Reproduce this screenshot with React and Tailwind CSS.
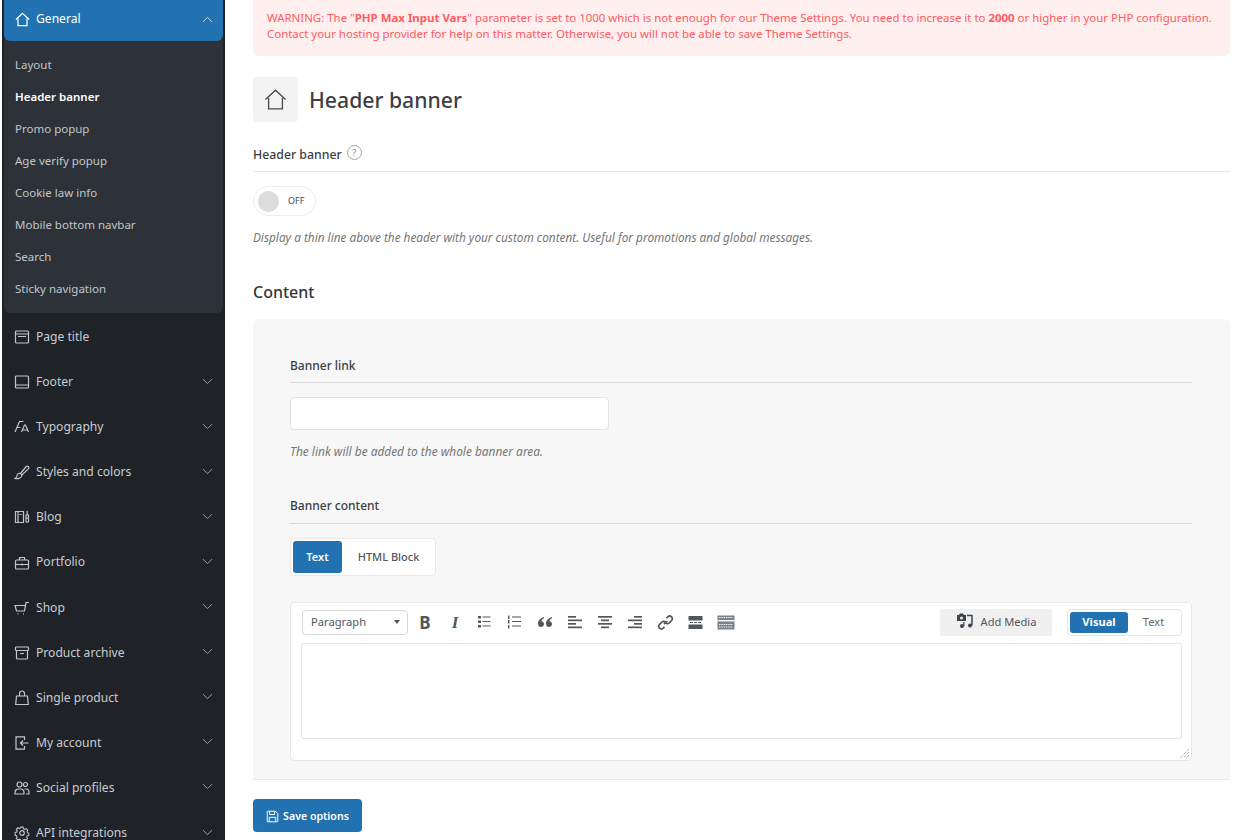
import { ChevronDown, ChevronUp } from 'lucide-react'

const Svg = ({ size = 16, sw = 1.2, className = '', children }) => (
  <svg width={size} height={size} viewBox="0 0 16 16" fill="none" stroke="currentColor" strokeWidth={sw} className={className}>
    {children}
  </svg>
)

const HomeIcon = ({ size = 16, sw = 1.2 }) => (
  <Svg size={size} sw={sw}>
    <path d="M1 8 8 1.5 15 8" />
    <path d="M3.2 7v7.5h9.6V7" />
  </Svg>
)

const icons = {
  page: <Svg><rect x="1.5" y="2" width="13" height="12" rx="1" /><path d="M1.5 5h13M4 7.5h8" /></Svg>,
  footer: <Svg><path d="M2.5 2h11a1 1 0 0 1 1 1v10a1 1 0 0 1-1 1h-11a1 1 0 0 1-1-1V3a1 1 0 0 1 1-1zM1.5 11h13" /></Svg>,
  type: <Svg><path d="M1 13 5.500 2.500H9.500M3 8.500h3.500M7.500 13l3-7h1l3 7M8.500 11h5" /></Svg>,
  brush: <Svg><path d="M6.500 9.500 12.200 2.500a1.600 1.600 0 0 1 2.300 2.200L8 11z" /><path d="M6.500 9.500C4.500 9 3.300 10 3 11.500c-.2 1.300-.8 2.500-2 3 2.500.5 6.500.3 7-3.500" /></Svg>,
  blog: <Svg><path d="M1.500 2.500h8v11h-8zM4 2.500v11M5.500 5.500h2M12 6h2.500v6a1.200 1.200 0 0 1-2.500 0zM13.200 2v4M12 9h2.500" /></Svg>,
  case: <Svg><rect x="1.500" y="5" width="13" height="9" rx="1" /><path d="M5.500 5V2.500h5V5M1.500 9.500h13M8 8.500v2" /></Svg>,
  cart: <Svg><path d="M1 5.500h10.500L10.500 11h-8zM11 8l1-5.500h3" /><path d="M3.500 14h.8M9 14h.8" strokeWidth="1.600" /></Svg>,
  archive: <Svg><rect x="1.500" y="2" width="13" height="3.500" rx=".8" /><path d="M2.500 5.500V13a1 1 0 0 0 1 1h9a1 1 0 0 0 1-1V5.500M6 8.500h4" /></Svg>,
  bag: <Svg><path d="M2.500 6h11l.8 8.500H1.700zM5.500 6V3.500a2.500 2.500 0 0 1 5 0V6" /></Svg>,
  login: <Svg><path d="M10.500 5V1.800h-8.500v12.400h8.500V11" /><path d="M14.500 8H6.500M9 5.500 6.500 8 9 10.500" /></Svg>,
  users: <Svg><circle cx="5.500" cy="4.500" r="2.500" /><circle cx="11.500" cy="4.500" r="2" /><path d="M1 14v-1.500A3.500 3.500 0 0 1 4.500 9h2A3.500 3.500 0 0 1 10 12.500V14zM10.500 9h1.500a3 3 0 0 1 3 3v2h-3" /></Svg>,
  gear: <Svg><circle cx="8" cy="8" r="2.300" /><path d="m6.800 1.500h2.400l.4 1.800 1.500.7 1.600-.9 1.700 1.700-.9 1.600.6 1.500 1.400.4v2.400l-1.700.5-.6 1.500.9 1.500-1.700 1.700-1.600-.9-1.500.6-.4 1.400H6.800l-.5-1.700-1.400-.5-1.600.9-1.700-1.700.9-1.600-.6-1.400-1.500-.5V7.400l1.700-.5.5-1.500-.9-1.500 1.700-1.700 1.600.9 1.400-.7z" transform="translate(.8 .8) scale(.9)" /></Svg>,
}

const subItems = ['Layout', 'Header banner', 'Promo popup', 'Age verify popup', 'Cookie law info', 'Mobile bottom navbar', 'Search', 'Sticky navigation']

const navItems = [
  { label: 'Page title', icon: 'page', noArrow: true },
  { label: 'Footer', icon: 'footer' },
  { label: 'Typography', icon: 'type' },
  { label: 'Styles and colors', icon: 'brush' },
  { label: 'Blog', icon: 'blog' },
  { label: 'Portfolio', icon: 'case' },
  { label: 'Shop', icon: 'cart' },
  { label: 'Product archive', icon: 'archive' },
  { label: 'Single product', icon: 'bag' },
  { label: 'My account', icon: 'login' },
  { label: 'Social profiles', icon: 'users' },
  { label: 'API integrations', icon: 'gear' },
]

function Sidebar() {
  return (
    <aside className="w-[223px] ml-[2px] shrink-0 bg-[#1f2328] h-[840px] overflow-hidden px-[2px]">
      <div className="bg-[#2c3238] rounded-b-md h-[313px]">
        <div className="h-[41px] bg-[#2271b1] rounded-b-md flex items-center pl-[11px] pr-[7px] pb-[3px] text-white">
          <HomeIcon size={15} sw={1.3} />
          <span className="ml-[6px] text-[12.1px] flex-1 pt-[1px]">General</span>
          <ChevronUp size={17} strokeWidth={1.3} className="text-[#cfe0ee]" />
        </div>
        <div className="pt-[8px]">
          {subItems.map((item) => (
            <div
              key={item}
              className={`h-[32px] flex items-center pl-[11px] text-[11.5px] ${item === 'Header banner' ? 'font-semibold text-white' : 'text-[#c3c6c9]'}`}
            >
              {item}
            </div>
          ))}
        </div>
      </div>
      <div className="pt-[1.5px]">
        {navItems.map((item) => (
          <div key={item.label} className="h-[45.1px] flex items-center pl-[10px] pr-[7px] text-[#c3c7cb]">
            <span className="w-[16px] flex justify-center">{icons[item.icon]}</span>
            <span className="ml-[6px] text-[12.1px] flex-1 text-[#c8cdd1]">{item.label}</span>
            {!item.noArrow && <ChevronDown size={17} strokeWidth={1.3} className="text-[#a0a5aa] -mt-[2px]" />}
          </div>
        ))}
      </div>
    </aside>
  )
}

function EditorToolbar() {
  const c = 'text-[#50575e]'
  const Lines = ({ rows }) => (
    <svg width="16" height="14" viewBox="0 0 16 14" fill="currentColor" className={c}>
      {rows.map(([x, y, w], i) => <rect key={i} x={x} y={y} width={w} height="1.700" />)}
    </svg>
  )
  return (
    <div className="flex items-center h-[38px] mb-[2px] pl-[11px] pr-[9px]">
      <div className="w-[106px] h-[25px] border border-[#d8d8d8] rounded-[4px] bg-white flex items-center pl-[8px] pr-[7px] text-[11.2px] text-[#50575e]">
        <span className="flex-1">Paragraph</span>
        <svg width="6" height="4" viewBox="0 0 6 4" fill="currentColor"><path d="M0 0h6L3 4z" /></svg>
      </div>
      <div className="flex items-center ml-[9px] gap-[14px]">
        <span className="w-[16px] text-center text-[17px] font-bold text-[#50575e] leading-none">B</span>
        <span className="w-[16px] text-center text-[17px] font-bold italic text-[#50575e] leading-none [font-family:'Liberation_Serif',serif]">I</span>
        <svg width="16" height="14" viewBox="0 0 16 14" fill="currentColor" className={c}>
          <rect x="1" y="1" width="3" height="2.500" /><rect x="1" y="5.500" width="3" height="2.500" /><rect x="1" y="10" width="3" height="2.500" />
          <rect x="5.500" y="1.500" width="8" height="1" /><rect x="5.500" y="6" width="8" height="1" /><rect x="5.500" y="10.500" width="8" height="1" />
        </svg>
        <svg width="16" height="14" viewBox="0 0 16 14" fill="currentColor" className={c}>
          <rect x="1" y="0.500" width="1.400" height="3.500" /><rect x="1" y="5" width="1.400" height="3.500" /><rect x="1" y="10" width="1.400" height="3.500" />
          <rect x="5" y="1.500" width="9" height="1" /><rect x="5" y="6" width="9" height="1" /><rect x="5" y="10.500" width="9" height="1" />
        </svg>
        <svg width="16" height="12" viewBox="0 0 16 12" fill="currentColor" className={c}>
          <path d="M7 1C4 2 1 4 1 7.500 1 10 2.500 11 4 11s3-1.200 3-3-1.300-2.700-2.800-2.700C4.500 3.800 5.500 2.800 7 2.300zM15 1c-3 1-6 3-6 6.500C9 10 10.500 11 12 11s3-1.200 3-3-1.300-2.700-2.800-2.700c.3-1.500 1.300-2.500 2.800-3z" />
        </svg>
        <Lines rows={[[1, 1, 8], [1, 4.5, 14], [1, 8, 8], [1, 11.500, 14]]} />
        <Lines rows={[[1, 1, 14], [4, 4.5, 8], [1, 8, 14], [4, 11.500, 8]]} />
        <Lines rows={[[7, 1, 8], [1, 4.5, 14], [7, 8, 8], [1, 11.500, 14]]} />
        <svg width="17" height="17" viewBox="0 0 17 17" fill="none" stroke="currentColor" strokeWidth="1.700" className={c}>
          <path d="M7 10.200 10.200 7M9.500 4.200l1.300-1.400a2.700 2.700 0 0 1 3.700 0 2.700 2.700 0 0 1 0 3.700l-2.300 2.300a2.700 2.700 0 0 1-3.700 0M7.500 12.800l-1.300 1.400a2.700 2.700 0 0 1-3.700 0 2.700 2.700 0 0 1 0-3.700l2.300-2.300a2.700 2.700 0 0 1 3.700 0" />
        </svg>
        <svg width="15" height="13" viewBox="0 0 15 13" fill="currentColor" className={c}>
          <rect x="0.500" y="0" width="14" height="4.500" /><rect x="0.500" y="8.500" width="14" height="4.500" />
          <rect x="2" y="6" width="3" height="1" /><rect x="6" y="6" width="3" height="1" /><rect x="10" y="6" width="3" height="1" />
        </svg>
        <svg width="18" height="15" viewBox="0 0 18 15" className={c}>
          <rect x="0.500" y="0.500" width="17" height="14" fill="#7b8187" />
          <path d="M2 2.500h14M2 9.500h14M2 12h14" stroke="#f4f4f4" strokeWidth="1" strokeDasharray="1.500 .8" />
          <rect x="0.500" y="5" width="17" height="1.500" fill="#f4f4f4" />
        </svg>
      </div>
      <div className="flex-1" />
      <div className="w-[112px] h-[27px] rounded-[3px] bg-[#f0f0f0] flex items-center justify-center text-[#50575e] text-[11.1px]">
        <svg width="17" height="16" viewBox="0 0 17 16" className="mr-[8px] -mt-[2px]">
          <path d="M1 2h2l1-1.500h3L8 2h2v6H1z" fill="#3c434a" />
          <circle cx="5.500" cy="5" r="1.500" fill="#f0f0f0" />
          <path d="M11 2.500h5v10" fill="none" stroke="#3c434a" strokeWidth="1.500" />
          <circle cx="14" cy="12.500" r="2" fill="#3c434a" />
          <circle cx="6" cy="13" r="2" fill="#3c434a" />
          <path d="M7.300 13V9h1.200v4z" fill="#3c434a" />
        </svg>
        Add Media
      </div>
      <div className="ml-[15px] w-[115px] h-[27px] rounded-[4px] border border-[#e5e5e5] bg-white flex items-center p-[2px] text-[11.1px]">
        <span className="w-[58px] h-[21px] bg-[#2271b1] text-white font-bold rounded-[3px] flex items-center justify-center">Visual</span>
        <span className="flex-1 text-center text-[#646970]">Text</span>
      </div>
    </div>
  )
}

function Main() {
  return (
    <main className="flex-1 min-w-0 pl-[28px] pr-[14px] h-[840px] overflow-hidden">
      <div className="h-[56px] bg-[#ffefef] rounded-b-md pl-[14px] pr-[4px] pt-[10px] text-[11.45px] leading-[16px] text-[#ff5b61]">
        <p>WARNING: The "<b>PHP Max Input Vars</b>" parameter is set to 1000 which is not enough for our Theme Settings. You need to increase it to <b>2000</b> or higher in your PHP configuration.</p>
        <p>Contact your hosting provider for help on this matter. Otherwise, you will not be able to save Theme Settings.</p>
      </div>

      <div className="mt-[21px] flex items-center">
        <div className="w-[45px] h-[45px] bg-[#f3f3f3] rounded-[4px] flex items-center justify-center text-[#44484d]">
          <HomeIcon size={23} sw={0.9} />
        </div>
        <h1 className="ml-[11px] text-[21.2px] font-medium text-[#3c3f43]">Header banner</h1>
      </div>

      <div className="mt-[19px] h-[31px] border-b border-[#e8e8e8] flex items-start text-[12.3px] font-medium text-[#3c3f43] pt-[5px]">
        <span className="leading-[18px]">Header banner</span>
        <span className="ml-[5px] -mt-[1px] w-[15px] h-[15px] rounded-full border border-[#a5a5a5] text-[#9a9a9a] text-[9px] flex items-center justify-center">?</span>
      </div>

      <div className="mt-[14px] w-[63px] h-[30px] rounded-full border border-[#ececec] flex items-center pl-[4px]">
        <span className="w-[21px] h-[21px] rounded-full bg-[#dcdcde]" />
        <span className="ml-[9px] -mt-[1px] text-[9px] text-[#44484d]">OFF</span>
      </div>
      <p className="mt-[13px] text-[11.8px] leading-[16px] italic text-[#767676]">
        Display a thin line above the header with your custom content. Useful for promotions and global messages.
      </p>

      <h2 className="mt-[35px] text-[16px] leading-[24px] font-medium text-[#33363a]">Content</h2>

      <section className="mt-[15px] h-[461px] bg-[#f7f7f7] border-b border-[#e8e8e8] rounded-t-md pl-[37px] pr-[38px] pt-[35px]">
        <div className="h-[29px] border-b border-[#d9d9d9] text-[12px] font-medium text-[#3c3f43] leading-[24px]">Banner link</div>
        <div className="mt-[14px] w-[319px] h-[33px] bg-white border border-[#e3e3e3] rounded-[4px]" />
        <p className="mt-[13px] text-[11.9px] leading-[16px] italic text-[#767676]">The link will be added to the whole banner area.</p>

        <div className="mt-[36px] h-[29px] border-b border-[#d9d9d9] text-[12px] font-medium text-[#3c3f43] leading-[22px]">Banner content</div>
        <div className="mt-[14px] w-[146px] h-[38px] bg-white border border-[#e8e8e8] rounded-[4px] flex items-center p-[2px] text-[11px]">
          <span className="w-[49px] h-[32px] bg-[#2271b1] text-white font-semibold rounded-[3px] flex items-center justify-center">Text</span>
          <span className="flex-1 text-center font-medium text-[#50575e] pl-[2px]">HTML Block</span>
        </div>

        <div className="mt-[26px] h-[159px] bg-white border border-[#e8e8e8] rounded-[4px] relative">
          <EditorToolbar />
          <div className="ml-[10px] mr-[9px] h-[96px] border border-[#e3e3e3] rounded-[3px]" />
          <svg width="9" height="9" viewBox="0 0 9 9" stroke="#9a9a9a" strokeWidth="1" className="absolute right-[2px] bottom-[2px]">
            <path d="M9 0 0 9M9 3 3 9M9 6 6 9" strokeDasharray="1 1" />
          </svg>
        </div>
      </section>

      <button className="mt-[19px] w-[109px] h-[33px] pt-[2px] bg-[#2271b1] rounded-[4px] text-white text-[10.6px] font-semibold flex items-center justify-center gap-[4px]">
        <Svg size={13}><path d="M2 1.500h9.500l3 3V14a.5.5 0 0 1-.5.5H2a.5.5 0 0 1-.5-.5V2a.5.5 0 0 1 .5-.5zM4.500 1.500v4h6v-4M4 14.500V9h8v5.500" /></Svg>
        Save options
      </button>
    </main>
  )
}

export default function App() {
  return (
    <div className="flex w-[1244px] h-[840px] overflow-hidden bg-white font-['Noto_Sans',sans-serif]">
      <Sidebar />
      <Main />
    </div>
  )
}
